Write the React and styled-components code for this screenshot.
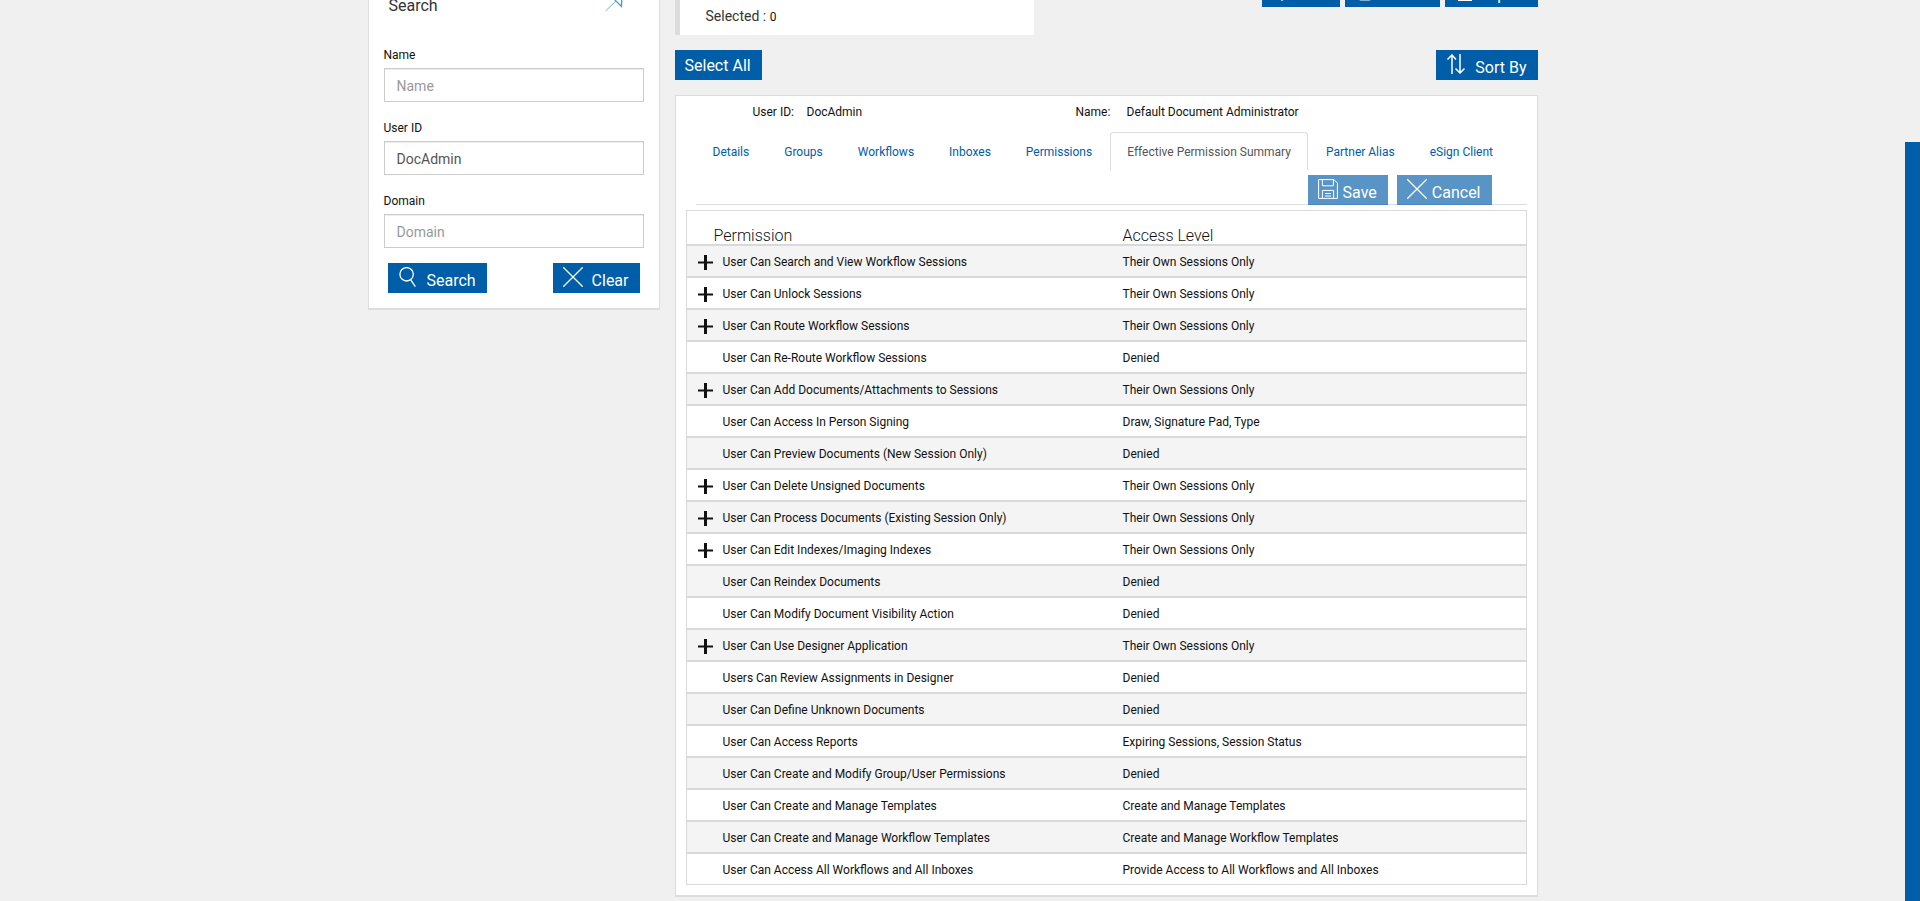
import React from 'react';
import styled, { createGlobalStyle } from 'styled-components';

const Global = createGlobalStyle`
  *, *::before, *::after { box-sizing: border-box; }
  body { margin: 0; background: #f0f0f0; color: #111; font-family: Roboto, "Liberation Sans", sans-serif; font-size: 12px; line-height: 17px; }
  h2, ul, p, dl, dd { margin: 0; padding: 0; }
  button, input { font-family: inherit; }
`;

const Shell = styled.div`
  display: flex;
  min-height: 100vh;
  overflow: hidden;
`;
const Page = styled.main`
  flex: 1;
  min-width: 0;
  margin-top: -23px;
`;
const Rail = styled.div`
  width: 15px;
  margin-top: 142px;
  background: #005da8;
`;
const Container = styled.div`
  display: grid;
  grid-template-columns: 292px minmax(0, 1fr);
  align-items: start;
  gap: 15px;
  max-width: 1170px;
  margin: 0 auto;
`;
const Panel = styled.section`
  background: #fff;
  border: solid #ddd;
  border-width: ${(p) => (p.$open ? '0 1px 2px' : '1px 1px 2px')};
`;
const SearchForm = styled.form`
  padding: 19px 15px 15px;
`;
const PanelHead = styled.header`
  display: flex;
  justify-content: space-between;
  align-items: flex-start;
  height: 51px;
  padding: 0 21px 0 5px;
`;
const PanelTitle = styled.h2`
  font-size: 16px;
  font-weight: 400;
  line-height: 20px;
  color: #333;
`;
const Field = styled.div`
  display: grid;
  gap: 4px;
  margin-bottom: ${(p) => (p.$last ? '15px' : '18px')};
`;
const Input = styled.input`
  width: 100%;
  height: 34px;
  padding: 7px 12px 5px;
  border: 1px solid #ccc;
  border-radius: 0;
  box-shadow: inset 0 1px 1px rgba(0, 0, 0, 0.075);
  background: #fff;
  color: #555;
  font-size: 14px;
  &::placeholder { color: #999; opacity: 1; }
`;
const FormActions = styled.div`
  display: flex;
  justify-content: space-between;
  padding: 0 4px;
`;
const Button = styled.button`
  display: inline-flex;
  align-items: flex-end;
  gap: ${(p) => (p.$tight ? '5px' : '9px')};
  height: 30px;
  padding: 4px 11px ${(p) => (p.$plain ? '4px' : '2px')} 10px;
  border: 0;
  background: #005da8;
  color: #fff;
  font-size: 16px;
  line-height: 20px;
  white-space: nowrap;
  cursor: pointer;
  &:disabled { opacity: 0.65; cursor: default; }
  svg { flex: none; margin-bottom: 4px; }
`;
const Main = styled.div`
  display: grid;
  gap: 15px;
`;
const TopRow = styled.div`
  display: flex;
  justify-content: space-between;
  align-items: flex-start;
`;
const Counter = styled.div`
  width: 41.6667%;
  height: 58px;
  padding: 31px 26px 0;
  border-left: 5px solid #ddd;
  background: #fff;
  color: #333;
  font-size: 14px;
  line-height: 17px;
  span { color: #111; font-size: 12px; }
`;
const Group = styled.div`
  display: flex;
  gap: 5px;
`;
const Body = styled.div`
  padding: 8px 10px 10px;
`;
const Info = styled.dl`
  display: grid;
  grid-template-columns: 54px 269px 51px 1fr;
  padding-left: 67px;
`;
const TabArea = styled.div`
  margin: 11px 0 5px 10px;
  border-bottom: 1px solid #ddd;
`;
const Tabs = styled.ul`
  display: flex;
  gap: 1px;
  list-style: none;
`;
const Tab = styled.a`
  display: block;
  padding: 11px 16px 9px;
  border: 1px solid ${(p) => (p.$active ? '#ddd' : 'transparent')};
  border-bottom-color: transparent;
  border-radius: 4px 4px 0 0;
  color: ${(p) => (p.$active ? '#555' : '#005da8')};
  text-decoration: none;
  white-space: nowrap;
`;
const TabActions = styled.div`
  display: flex;
  justify-content: flex-end;
  gap: 9px;
  margin: 4px 35px -1px 0;
`;
const Table = styled.table`
  width: 100%;
  table-layout: fixed;
  border: solid #d9d9d9;
  border-width: 0 1px;
  border-collapse: separate;
  border-spacing: 0;
`;
const HeadCell = styled.th`
  width: ${(p) => p.$width || 'auto'};
  height: 35px;
  padding: 0 0 0 ${(p) => (p.$first ? '27px' : '0')};
  border: solid #d9d9d9;
  border-width: 1px 0;
  font-size: 16px;
  font-weight: 300;
  line-height: 16px;
  text-align: left;
  vertical-align: bottom;
`;
const Row = styled.tr`
  background: ${(p) => (p.$shaded ? '#f4f4f4' : '#fff')};
`;
const Cell = styled.td`
  height: 32px;
  padding: 2px 0 0;
  border: solid #d9d9d9;
  border-width: 1px 0;
`;
const Name = styled.div`
  display: grid;
  grid-template-columns: 15px 1fr;
  gap: 10px;
  align-items: center;
  padding-left: 11px;
`;
const Expander = styled.button`
  display: block;
  width: 15px;
  height: 15px;
  padding: 0;
  border: 0;
  background: none;
  color: #111;
  cursor: pointer;
  svg { display: block; }
`;

const Icon = ({ children }) => (
  <svg width="20" height="20" viewBox="0 0 20 20" fill="none" stroke="currentColor" strokeWidth="1.3" aria-hidden="true">
    {children}
  </svg>
);
const SearchIcon = () => (<Icon><circle cx="8.6" cy="7.3" r="6.7" /><path d="M12.6 12.6 17.3 19.6" /></Icon>);
const CrossIcon = () => (<Icon><path d="M.3.3 19.7 19.7M19.7.3.3 19.7" /></Icon>);
const SortIcon = () => (<Icon><path d="M6 20V1M1.5 5.5 6 1l4 4.5M14 0v19M9.5 14.5 14 19l4.5-4.5" strokeWidth="1.5" /></Icon>);
const SaveIcon = () => (
  <Icon>
    <path d="M.6.6H16l3.4 3.4v15.4H.6zM4.4.6v6.2h11V.6M4.4 19.4v-8h11.2v8M7 14.5h6M7 17h6" strokeWidth="1" />
  </Icon>
);
const AddIcon = () => (<Icon><path d="M10 0v20M0 10h20" /></Icon>);
const TrashIcon = () => (
  <Icon><path d="M1 3h18M7 3V.6h6V3" /><path d="M4 5h12v13q0 2-2 2H6q-2 0-2-2z" fill="currentColor" fillOpacity=".5" stroke="none" /></Icon>
);
const ExportIcon = () => (<Icon><path d="M4 10v9h12v-9" strokeWidth="2" /><path d="M10 13V1M6 5l4-4 4 4" /></Icon>);
const PinIcon = () => (
  <svg width="20" height="20" viewBox="0 0 20 20" fill="none" stroke="#4a9cc0" strokeWidth="1.3" aria-hidden="true">
    <path d="M11 3 18.5 10.5 18.8 1" /><path d="M13 5 2.5 15" strokeWidth=".8" />
  </svg>
);
const PlusIcon = () => (
  <svg width="15" height="15" viewBox="0 0 15 15" fill="currentColor" aria-hidden="true">
    <path d="M6 0h3v15H6zM0 6.5h15v2H0z" />
  </svg>
);

const OWN = 'Their Own Sessions Only';
const permissions = [
  ['User Can Search and View Workflow Sessions', OWN, true],
  ['User Can Unlock Sessions', OWN, true],
  ['User Can Route Workflow Sessions', OWN, true],
  ['User Can Re-Route Workflow Sessions', 'Denied'],
  ['User Can Add Documents/Attachments to Sessions', OWN, true],
  ['User Can Access In Person Signing', 'Draw, Signature Pad, Type'],
  ['User Can Preview Documents (New Session Only)', 'Denied'],
  ['User Can Delete Unsigned Documents', OWN, true],
  ['User Can Process Documents (Existing Session Only)', OWN, true],
  ['User Can Edit Indexes/Imaging Indexes', OWN, true],
  ['User Can Reindex Documents', 'Denied'],
  ['User Can Modify Document Visibility Action', 'Denied'],
  ['User Can Use Designer Application', OWN, true],
  ['Users Can Review Assignments in Designer', 'Denied'],
  ['User Can Define Unknown Documents', 'Denied'],
  ['User Can Access Reports', 'Expiring Sessions, Session Status'],
  ['User Can Create and Modify Group/User Permissions', 'Denied'],
  ['User Can Create and Manage Templates', 'Create and Manage Templates'],
  ['User Can Create and Manage Workflow Templates', 'Create and Manage Workflow Templates'],
  ['User Can Access All Workflows and All Inboxes', 'Provide Access to All Workflows and All Inboxes'],
];
const tabs = ['Details', 'Groups', 'Workflows', 'Inboxes', 'Permissions', 'Effective Permission Summary', 'Partner Alias', 'eSign Client'];
const fields = [
  { id: 'name', label: 'Name' },
  { id: 'user-id', label: 'User ID', value: 'DocAdmin' },
  { id: 'domain', label: 'Domain' },
];

export default function App() {
  return (
    <Shell>
      <Global />
      <Page>
        <Container>
          <Panel $open>
            <SearchForm onSubmit={(e) => e.preventDefault()}>
              <PanelHead>
                <PanelTitle>Search</PanelTitle>
                <PinIcon />
              </PanelHead>
              {fields.map((f, i) => (
                <Field key={f.id} $last={i === fields.length - 1}>
                  <label htmlFor={f.id}>{f.label}</label>
                  <Input id={f.id} type="text" placeholder={f.label} defaultValue={f.value} />
                </Field>
              ))}
              <FormActions>
                <Button type="submit"><SearchIcon />Search</Button>
                <Button type="reset"><CrossIcon />Clear</Button>
              </FormActions>
            </SearchForm>
          </Panel>

          <Main>
            <TopRow>
              <Counter>Selected : <span>0</span></Counter>
              <Group>
                <Button type="button"><AddIcon />Add</Button>
                <Button type="button"><TrashIcon />Delete</Button>
                <Button type="button" $tight><ExportIcon />Export</Button>
              </Group>
            </TopRow>
            <TopRow>
              <Button type="button" $plain>Select All</Button>
              <Button type="button"><SortIcon />Sort By</Button>
            </TopRow>
            <Panel>
              <Body>
                <Info>
                  <dt>User ID:</dt>
                  <dd>DocAdmin</dd>
                  <dt>Name:</dt>
                  <dd>Default Document Administrator</dd>
                </Info>
                <TabArea>
                  <Tabs>
                    {tabs.map((t, i) => (
                      <li key={t}><Tab href="#" $active={i === 5}>{t}</Tab></li>
                    ))}
                  </Tabs>
                  <TabActions>
                    <Button type="button" $tight disabled><SaveIcon />Save</Button>
                    <Button type="button" $tight disabled><CrossIcon />Cancel</Button>
                  </TabActions>
                </TabArea>
                <Table>
                  <thead>
                    <tr>
                      <HeadCell $first $width="436px" scope="col">Permission</HeadCell>
                      <HeadCell scope="col">Access Level</HeadCell>
                    </tr>
                  </thead>
                  <tbody>
                    {permissions.map(([name, level, expandable], i) => (
                      <Row key={name} $shaded={i % 2 === 0}>
                        <Cell>
                          <Name>
                            {expandable ? <Expander type="button" aria-label={`Expand ${name}`}><PlusIcon /></Expander> : <i />}
                            <span>{name}</span>
                          </Name>
                        </Cell>
                        <Cell>{level}</Cell>
                      </Row>
                    ))}
                  </tbody>
                </Table>
              </Body>
            </Panel>
          </Main>
        </Container>
      </Page>
      <Rail />
    </Shell>
  );
}
